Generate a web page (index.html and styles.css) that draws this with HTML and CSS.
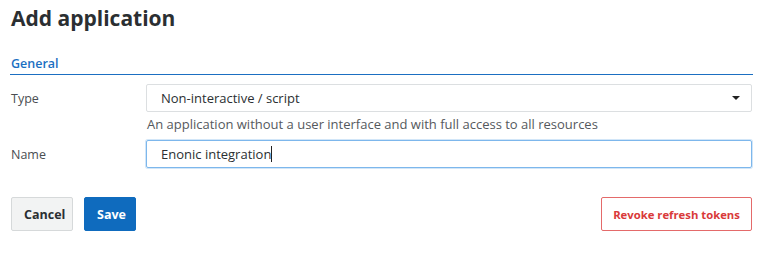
FILE: index.html
```html
<!DOCTYPE html>
<html lang="en">
<head>
    <meta charset="UTF-8">
    <title>Add application</title>
    <link rel="stylesheet" href="styles.css">
</head>
<body>
    <div class="page">
        <h1>Add application</h1>

        <fieldset class="section">
            <legend class="section-title">General</legend>

            <div class="row">
                <label class="row-label" for="type">Type</label>
                <div class="row-field">
                    <div class="select" id="type">
                        <span>Non-interactive / script</span>
                        <span class="caret"></span>
                    </div>
                    <p class="help">An application without a user interface and with full access to all resources</p>
                </div>
            </div>

            <div class="row">
                <label class="row-label" for="name">Name</label>
                <div class="row-field">
                    <div class="text-input focused" id="name">Enonic integration<span class="cursor"></span></div>
                </div>
            </div>
        </fieldset>

        <div class="actions">
            <div class="actions-left">
                <button class="btn btn-default">Cancel</button>
                <button class="btn btn-primary">Save</button>
            </div>
            <button class="btn btn-danger">Revoke refresh tokens</button>
        </div>
    </div>
</body>
</html>
```

FILE: styles.css
```css
body {
    margin: 0;
    font-family: 'Open Sans', 'Liberation Sans', sans-serif;
    color: #2e3235;
    background-color: #ffffff;
}
.page {
    padding: 0 16px 0 10px;
}
h1 {
    margin: 3px 0 0 1px;
    font-size: 21px;
    line-height: 30px;
    font-weight: 700;
    color: #2b2f32;
}
.section {
    margin: 22px 0 0;
    padding: 0;
    border: none;
}
.section-title {
    display: block;
    width: 100%;
    padding: 0 0 2px 1px;
    font-size: 12.5px;
    line-height: 17px;
    font-weight: 600;
    color: #1b6fc2;
    border-bottom: 1px solid #1b6fc2;
}
.row {
    display: grid;
    grid-template-columns: 136px 1fr;
}
.row:first-of-type {
    margin-top: 9px;
}
.row + .row {
    margin-top: 7px;
}
.row-label {
    padding-top: 6px;
    padding-left: 1px;
    font-size: 12.5px;
    line-height: 17px;
    color: #4a4e52;
}
.select {
    display: flex;
    justify-content: space-between;
    align-items: center;
    height: 26px;
    padding: 0 11px 0 14px;
    border: 1px solid #dcdfe1;
    border-radius: 2px;
    font-size: 13px;
    color: #2b2f32;
}
.caret {
    width: 0;
    height: 0;
    border-left: 4px solid transparent;
    border-right: 4px solid transparent;
    border-top: 4px solid #222;
}
.help {
    margin: 4px 0 0 1px;
    font-size: 13px;
    line-height: 17px;
    color: #55595d;
}
.text-input {
    display: flex;
    align-items: center;
    height: 26px;
    padding: 0 14px;
    border: 1px solid #7db7ec;
    border-radius: 2px;
    box-shadow: 0 0 0 1px #d2e6f8;
    font-size: 13px;
    color: #2b2f32;
}
.cursor {
    display: inline-block;
    width: 1px;
    height: 16px;
    background-color: #222;
}
.actions {
    display: flex;
    justify-content: space-between;
    margin-top: 29px;
    padding-left: 1px;
}
.actions-left {
    display: flex;
    gap: 11px;
}
.btn {
    height: 34px;
    padding: 0 12px;
    border-radius: 2px;
    font-family: inherit;
    font-size: 12.5px;
    font-weight: 700;
    white-space: nowrap;
    cursor: pointer;
}
.btn-default {
    width: 62px;
    background-color: #f2f3f3;
    border: 1px solid #d6d9da;
    color: #2b2f32;
}
.btn-primary {
    width: 52px;
    background-color: #0f6bbe;
    border: 1px solid #0f6bbe;
    color: #ffffff;
}
.btn-danger {
    width: 151px;
    padding: 0;
    font-size: 11.3px;
    background-color: #ffffff;
    border: 1px solid #e46a6a;
    color: #d93a3a;
}
```
